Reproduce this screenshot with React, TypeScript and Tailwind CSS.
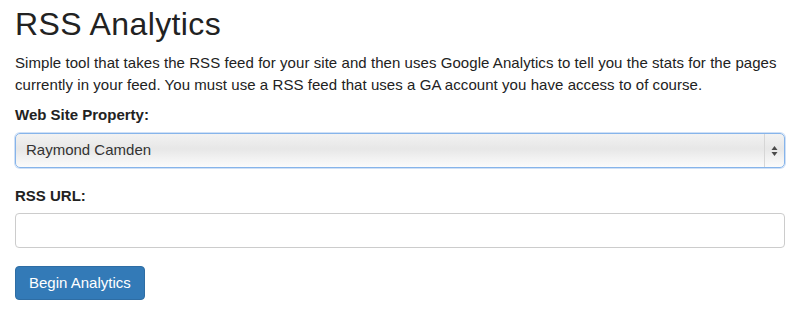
import React from 'react';

const SelectArrows = () => (
    <svg width="7" height="12" viewBox="0 0 7 12" className="block">
        <path d="M3.5 1 L6.5 5 L0.5 5 Z" fill="#4a4a4a" />
        <path d="M3.5 11 L6.5 7 L0.5 7 Z" fill="#4a4a4a" />
    </svg>
);

const App: React.FC = () => {
    return (
        <div
            className="w-[800px] h-[334px] bg-white px-[15px] text-[#333] overflow-hidden"
            style={{ fontFamily: '"Liberation Sans", Arial, sans-serif' }}
        >
            <h1 className="mt-[7px] text-[32px] leading-[35px] tracking-[0.4px] text-[#222]">
                RSS Analytics
            </h1>
            <p className="mt-[10px] text-[15px] leading-[22px] tracking-[0.06px] text-[#222]">
                Simple tool that takes the RSS feed for your site and then uses
                Google Analytics to tell you the stats for the pages currently in
                your feed. You must use a RSS feed that uses a GA account you have
                access to of course.
            </p>

            <label className="block mt-[8px] text-[15px] leading-[22px] font-bold text-[#222]">
                Web Site Property:
            </label>
            <div className="mt-[7px] h-[35px] flex items-stretch rounded-[5px] border border-[#86b4ea] shadow-[0_0_0_1px_#cfe0f6] bg-[linear-gradient(to_bottom,#f2f2f2_0%,#e7e7e7_45%,#f4f4f4_80%,#fbfbfb_100%)]">
                <div className="flex-1 flex items-center pl-[10px] text-[15px] text-[#333]">
                    Raymond Camden
                </div>
                <div className="w-[20px] flex items-center justify-center border-l border-[#d6d6d6]">
                    <SelectArrows />
                </div>
            </div>

            <label className="block mt-[17px] text-[15px] leading-[22px] font-bold text-[#222]">
                RSS URL:
            </label>
            <input
                type="text"
                className="block mt-[6px] w-full h-[35px] rounded-[4px] border border-[#ccc] bg-white px-3 text-[15px] outline-none"
            />

            <button className="mt-[18px] h-[34px] px-[13px] rounded-[4px] border border-[#2e6da4] bg-[#337ab7] text-white text-[15px]">
                Begin Analytics
            </button>
        </div>
    );
};

export default App;
